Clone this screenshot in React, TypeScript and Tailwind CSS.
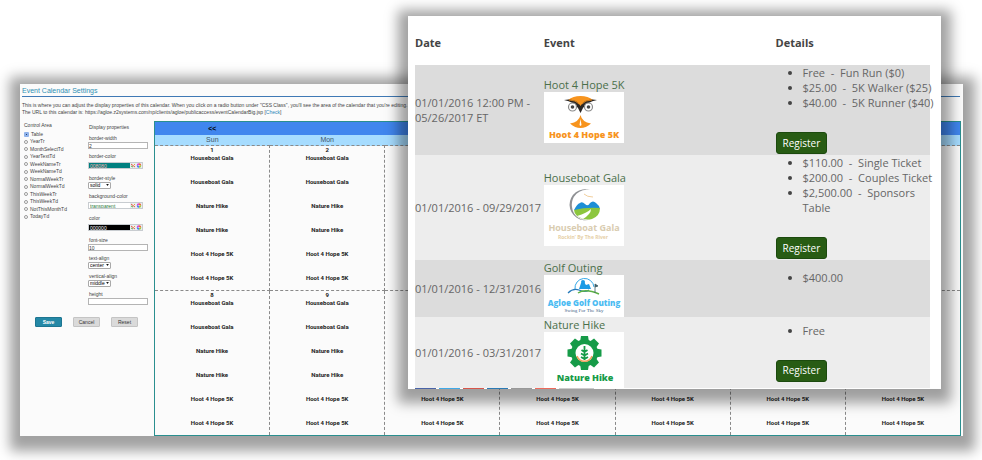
import { useState } from "react";
import type { ReactNode } from "react";

const areas = [
  "Table",
  "YearTr",
  "MonthSelectTd",
  "YearTextTd",
  "WeekNameTr",
  "WeekNameTd",
  "NormalWeekTr",
  "NormalWeekTd",
  "ThisWeekTr",
  "ThisWeekTd",
  "NotThisMonthTd",
  "TodayTd",
];

const days = ["Sun", "Mon", "Tue", "Wed", "Thu", "Fri", "Sat"];
const weeks = [
  [1, 2, 3, 4, 5, 6, 7],
  [8, 9, 10, 11, 12, 13, 14],
];
const dayEvents = [
  "Houseboat Gala",
  "Houseboat Gala",
  "Nature Hike",
  "Nature Hike",
  "Hoot 4 Hope 5K",
  "Hoot 4 Hope 5K",
];

const HootLogo = () => (
  <svg viewBox="0 0 80 51" className="block h-[51px] w-20 bg-white">
    <path d="M24 8 Q29 4 36.500 4 Q44 4 49 8 L42 11 L36.500 17 L31 11 Z" fill="#f7941e" />
    <path d="M20 8 Q32 6 36.500 14 Q41 6 53 8 Q43 10 39 16 L36.500 21 L34 16 Q30 10 20 8 Z" fill="#2b2724" />
    <path d="M25 8 Q32 8 35 12 M48 8 Q41 8 38 12" stroke="#f7941e" strokeWidth="0.800" fill="none" />
    <circle cx="28.500" cy="15" r="4" fill="#fff" stroke="#8b8b8b" strokeWidth="1.200" />
    <circle cx="44.500" cy="15" r="4" fill="#fff" stroke="#8b8b8b" strokeWidth="1.200" />
    <circle cx="28.500" cy="15" r="1.800" fill="#444" />
    <circle cx="44.500" cy="15" r="1.800" fill="#444" />
    <path d="M36.500 23 Q38 30 47 31.500 Q42 36 36.500 36 Q31 36 26 31.500 Q35 30 36.500 23 Z" fill="#f7941e" />
    <path d="M36.500 27 L37.500 33 L36.500 34 L35.500 33 Z" fill="#fff" />
    <text x="40" y="46" textAnchor="middle" className="fill-[#f7941e] font-['Open_Sans',sans-serif] text-[9px] font-extrabold">
      Hoot 4 Hope 5K
    </text>
  </svg>
);

const HouseboatLogo = () => (
  <svg viewBox="0 0 80 61" className="block h-[61px] w-20 bg-white">
    <path d="M46 5 A15.500 15.500 0 1 0 47 34 A14 14 0 0 1 28 22 A15 15 0 0 1 46 5 Z" fill="#8f9194" />
    <path d="M30 25 Q33 19 36 18 Q38 16 41 19 Q44 22 46 18 Q49 15 52 18 Q55 20 56 24 L48 25 Z" fill="#1c8fd6" />
    <path d="M30 25 Q42 22 56 23 Q56 31 48 34 Q40 36 33 31 Q30 28 30 25 Z" fill="#8cc63e" />
    <path d="M33 31 Q43 28 47 24 Q47 29 39 34 Z" fill="#fff" />
    <path d="M40 9 Q43 12 49 12" stroke="#f2cf9d" fill="none" />
    <text x="40" y="46" textAnchor="middle" className="fill-[#d9ccb0] font-['Open_Sans',sans-serif] text-[9px] font-bold">
      Houseboat Gala
    </text>
    <text x="39" y="54" textAnchor="middle" className="fill-[#e6cfa6] font-['Open_Sans',sans-serif] text-[5px] font-bold">
      Rockin’ By The River
    </text>
  </svg>
);

const GolfLogo = () => (
  <svg viewBox="0 0 80 42" className="block h-[42px] w-20 bg-white">
    <path d="M31 14 A9.500 9.500 0 1 1 50 12" stroke="#35a9e8" fill="none" />
    <path d="M35 14 L37 8 L40 7 L42 10 L45 9 L47 14 Z" fill="#1a9ae5" />
    <circle cx="39" cy="7" r="2" fill="#1a9ae5" />
    <path d="M24 18 Q29 13 35 15 Q41 18 45 15" stroke="#2579b9" strokeWidth="1.200" fill="none" />
    <path d="M34 18 Q41 13 55 19" stroke="#5cb144" strokeWidth="1.500" fill="none" />
    <path d="M51 18 V9 L54 11 L51 12" stroke="#3d5d66" fill="#3d5d66" strokeWidth="0.800" />
    <text x="40" y="31" textAnchor="middle" className="fill-[#4cbcf2] font-['Open_Sans',sans-serif] text-[8px] font-extrabold">
      Agloe Golf Outing
    </text>
    <text x="40" y="37" textAnchor="middle" className="fill-[#3f6286] font-['Liberation_Serif',serif] text-[5px]">
      Swing For The Sky
    </text>
  </svg>
);

const teeth = [0, 45, 90, 135, 180, 225, 270, 315];

const HikeLogo = () => (
  <svg viewBox="0 0 80 56" className="block h-14 w-20 bg-white">
    {teeth.map((angle) => (
      <path key={angle} d="M36 10 L37 4 H44 L45 10 Z" fill="#169b48" transform={`rotate(${angle} 40.500 21)`} />
    ))}
    <circle cx="40.500" cy="21" r="13.500" fill="#169b48" />
    <circle cx="40.500" cy="21" r="9" fill="#fff" />
    <path d="M33 24 A8 8 0 0 0 48 24" stroke="#f3a25f" strokeWidth="1.600" fill="none" />
    <path
      d="M40.500 28 V14 M40.500 27 L37 25 M40.500 27 L44 25 M40.500 23.500 L37 21.500 M40.500 23.500 L44 21.500 M40.500 20 L37.500 18 M40.500 20 L43.500 18"
      stroke="#169b48"
      strokeWidth="1.800"
      fill="none"
    />
    <text x="41" y="49" textAnchor="middle" className="fill-[#169b48] font-['Open_Sans',sans-serif] text-[9px] font-extrabold">
      Nature Hike
    </text>
  </svg>
);

const events = [
  {
    name: "Hoot 4 Hope 5K",
    date: "01/01/2016 12:00 PM - 05/26/2017 ET",
    logo: <HootLogo />,
    prices: [
      "Free\u00a0 -\u00a0 Fun Run ($0)",
      "$25.00\u00a0 -\u00a0 5K Walker ($25)",
      "$40.00\u00a0 -\u00a0 5K Runner ($40)",
    ],
    register: true,
  },
  {
    name: "Houseboat Gala",
    date: "01/01/2016 - 09/29/2017",
    logo: <HouseboatLogo />,
    prices: [
      "$110.00\u00a0 -\u00a0 Single Ticket",
      "$200.00\u00a0 -\u00a0 Couples Ticket",
      "$2,500.00\u00a0 -\u00a0 Sponsors Table",
    ],
    register: true,
  },
  {
    name: "Golf Outing",
    date: "01/01/2016 - 12/31/2016",
    logo: <GolfLogo />,
    prices: ["$400.00"],
    register: false,
  },
  {
    name: "Nature Hike",
    date: "01/01/2016 - 03/31/2017",
    logo: <HikeLogo />,
    prices: ["Free"],
    register: true,
  },
];

const Field = ({ name, children }: { name: string; children: ReactNode }) => (
  <div className="mb-1 flex flex-col items-start">
    <label htmlFor={name} className="pl-px">
      {name}
    </label>
    {children}
  </div>
);

const TextField = ({ name, value }: { name: string; value: string }) => (
  <Field name={name}>
    <input
      id={name}
      defaultValue={value}
      className="h-[7px] w-full border border-[#b4b4b4] bg-white text-[5px] leading-[5px] text-[#333]"
    />
  </Field>
);

const ColorField = ({ name, value, look }: { name: string; value: string; look: string }) => (
  <Field name={name}>
    <div className="mt-0.5 mb-0.5 flex h-[7px] w-[55px] border border-[#c8ccd0] bg-[#e9edf2]">
      <input id={name} defaultValue={value} className={`h-full min-w-0 flex-1 px-px text-[5px] leading-[5px] ${look}`} />
      <button aria-label={`${name} palette`} className="w-[6px]">
        <svg viewBox="0 0 6 5" className="h-full w-full">
          <path d="M1 1 H5 V4 H1 Z" fill="#f4f0e6" />
          <path d="M1 1 L5 4" stroke="#e2574c" />
          <path d="M1 3 L3 4" stroke="#5fb04f" />
          <path d="M4 1 L5 2" stroke="#e9a13b" />
        </svg>
      </button>
      <button aria-label={`${name} wheel`} className="w-[6px]">
        <svg viewBox="0 0 6 5" className="h-full w-full" fill="none" strokeWidth="1.500">
          <path d="M1.500 2.500 A1.500 1.500 0 0 1 3 1" stroke="#d93fd0" />
          <path d="M3 1 A1.500 1.500 0 0 1 4.500 2.500" stroke="#f0602f" />
          <path d="M4.500 2.500 A1.500 1.500 0 0 1 3 4" stroke="#9ccc2e" />
          <path d="M3 4 A1.500 1.500 0 0 1 1.500 2.500" stroke="#3c7df0" />
        </svg>
      </button>
    </div>
  </Field>
);

const SelectField = ({ name, options }: { name: string; options: string[] }) => (
  <Field name={name}>
    <div className="relative">
      <select
        id={name}
        className="block h-[7px] w-[23px] appearance-none rounded-[1px] border border-[#a9a9a9] bg-white pl-px text-[5px] leading-[5px] text-black"
      >
        {options.map((option) => (
          <option key={option}>{option}</option>
        ))}
      </select>
      <svg viewBox="0 0 4 3" className="pointer-events-none absolute top-0.5 right-0.5 h-0.5 w-[3px]">
        <path d="M0 0 H4 L2 3 Z" fill="#111" />
      </svg>
    </div>
  </Field>
);

const CalendarSettings = () => {
  const [area, setArea] = useState("Table");

  return (
    <section className="overflow-hidden bg-[#fbfbfb] font-['Liberation_Sans',Arial,sans-serif] text-[5px] leading-[7px] text-[#444]">
      <h1 className="mr-[3px] ml-0.5 border-b border-[#3f79b5] pt-[3px] pb-px text-[7px] leading-[8px] text-[#2f8fb3]">
        Event Calendar Settings
      </h1>
      <p className="pt-[5px] pl-0.5 whitespace-nowrap">
        This is where you can adjust the display properties of this calendar. When you click on a radio button under "CSS
        Class", you'll see the area of the calendar that you're editing. Adjust the
        <br />
        The URL to this calendar is: https://agloe.z2systems.com/np/clients/agloe/publicaccess/eventCalendarBig.jsp [
        <a href="#check" className="text-[#2a86b8]">Check</a>]
      </p>
      <div className="mt-[5px] flex">
        {/* Controls */}
        <form className="w-[134px] shrink-0 pl-1" onSubmit={(e) => e.preventDefault()}>
          <div className="flex">
            <fieldset className="w-16 pt-px">
              <legend className="contents">Control Area</legend>
              <div className="mt-0.5 flex h-[89px] flex-col justify-between">
                {areas.map((name) => (
                  <label key={name} className="flex h-[6px] items-center gap-0.5">
                    <input
                      type="radio"
                      name="area"
                      checked={area === name}
                      onChange={() => setArea(name)}
                      className="size-1 appearance-none rounded-full border border-[#999] bg-white checked:size-[5px] checked:rounded-[1px] checked:border-2 checked:border-[#8fb2ea] checked:bg-[#27406e]"
                    />
                    {name}
                  </label>
                ))}
              </div>
            </fieldset>
            <div className="w-[60px] pt-[3px]">
              <p className="mb-1 pl-px">Display properties</p>
              <TextField name="border-width" value="2" />
              <ColorField name="border-color" value="008080" look="bg-[#008080] text-[#ffb0b0]" />
              <SelectField name="border-style" options={["solid", "dashed", "dotted"]} />
              <ColorField name="background-color" value="transparent" look="bg-white text-[#2d7a3a]" />
              <ColorField name="color" value="000000" look="bg-black text-white" />
              <TextField name="font-size" value="10" />
              <SelectField name="text-align" options={["center", "left", "right"]} />
              <SelectField name="vertical-align" options={["middle", "top", "bottom"]} />
              <TextField name="height" value="" />
            </div>
          </div>
          <div className="mt-2 flex gap-[11px] pl-[11px]">
            <button className="h-2.5 w-[27px] rounded-[1px] border border-[#1d7591] bg-[#2488a6] font-bold text-white">
              Save
            </button>
            <button className="h-2.5 w-[27px] rounded-[1px] border border-[#c4c4c4] bg-[#dadada] text-[#333]">Cancel</button>
            <button className="h-2.5 w-[27px] rounded-[1px] border border-[#c4c4c4] bg-[#dadada] text-[#333]">Reset</button>
          </div>
        </form>
        {/* Calendar */}
        <table className="mr-0.5 min-w-0 flex-1 table-fixed border-collapse border border-[#2a8f8f] text-center">
          <thead>
            <tr className="h-[13px] bg-[#4086ee] text-[7px] text-black">
              <th>&lt;&lt;</th>
              <th colSpan={6}></th>
            </tr>
            <tr className="h-[11px] bg-[#a6dcff] text-[7px] text-[#3d5568]">
              {days.map((day) => (
                <th key={day} className="w-[14%] font-normal">
                  {day}
                </th>
              ))}
            </tr>
          </thead>
          <tbody className="font-['Roboto',sans-serif] text-[6px] leading-[8px] font-bold text-[#222]">
            {weeks.map((week) => (
              <tr key={week[0]}>
                {week.map((day) => (
                  <td key={day} className="border border-dashed border-[#8a8a8a] pb-2 align-top">
                    <div>{day}</div>
                    <ul className="flex flex-col gap-4">
                      {dayEvents.map((name, i) => (
                        <li key={i}>{name}</li>
                      ))}
                    </ul>
                  </td>
                ))}
              </tr>
            ))}
          </tbody>
        </table>
      </div>
    </section>
  );
};

const EventList = () => (
  <section className="absolute top-4 right-[41px] left-[408px] bg-white pr-[11px] pl-[7px] font-['Open_Sans',sans-serif] text-[11px] leading-[15px] text-[#666] shadow-[0_4px_12px_10px_rgba(0,0,0,0.37)]">
    <table className="w-full table-fixed border-collapse text-left">
      <thead>
        <tr className="h-[49px] text-[#444]">
          <th className="w-[25%] pt-1">Date</th>
          <th className="w-[45%] pt-1">Event</th>
          <th className="w-[30%] pt-1">Details</th>
        </tr>
      </thead>
      <tbody>
        {events.map((event) => (
          <tr key={event.name} className="odd:bg-[#dcdcdc] even:bg-[#ededed]">
            <td>{event.date}</td>
            <td>
              <a href="#event" className="text-[#4a6f4a]">{event.name}</a>
              {event.logo}
            </td>
            <td>
              <ul className="-mr-2 mb-[22px] list-disc pl-[27px] marker:text-[#444]">
                {event.prices.map((price) => (
                  <li key={price}>{price}</li>
                ))}
              </ul>
              {event.register && (
                <button className="mb-px block h-[22px] rounded-[3px] border border-[#1c4a0e] bg-[#285c14] px-1.5 text-[10px] text-white">
                  Register
                </button>
              )}
            </td>
          </tr>
        ))}
      </tbody>
    </table>
    {/* Share bar */}
    <div className="flex h-px gap-[3px]">
      <span className="w-[21px] bg-[#4a64a8]" />
      <span className="w-[21px] bg-[#3fa9e8]" />
      <span className="w-[21px] bg-[#d9564a]" />
      <span className="w-[21px] bg-[#2b7ab5]" />
      <span className="w-[21px] bg-[#999]" />
      <span className="w-[21px] bg-[#ee6a5c]" />
      <span className="w-[35px] bg-[#ccc]" />
    </div>
  </section>
);

const App = () => {
  return (
    <main className="relative overflow-hidden bg-white pt-[84px] pr-[19px] pb-6 pl-5">
      <div className="shadow-[1px_4px_12px_11px_rgba(0,0,0,0.37)]">
        <CalendarSettings />
      </div>
      <EventList />
    </main>
  );
};

export default App;
